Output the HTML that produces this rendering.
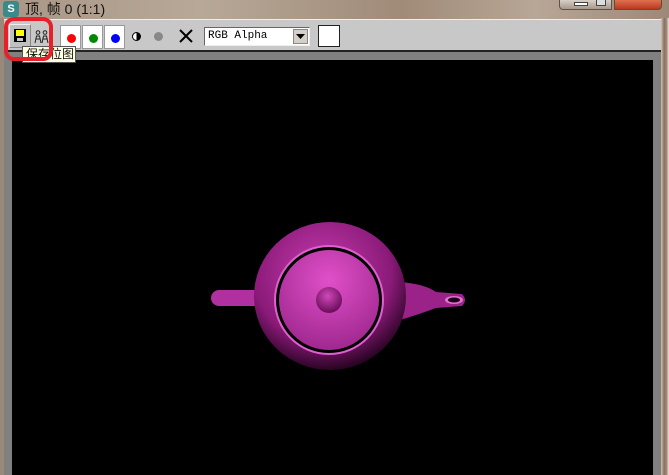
<!DOCTYPE html>
<html><head><meta charset="utf-8"><style>
*{margin:0;padding:0;box-sizing:border-box}
body{width:669px;height:475px;overflow:hidden;position:relative;background:#8a7a6c;font-family:"Liberation Sans","Noto Sans CJK SC",sans-serif}
.title{position:absolute;left:0;top:0;width:669px;height:20px;background:linear-gradient(90deg,#a89686,#b8a898 30%,#a08b78 60%,#b8a696 80%,#9e8878)}
.frameR{position:absolute;right:0;top:18px;width:8px;height:457px;background:linear-gradient(90deg,#cfc2b3,#8a7060 40%,#a08878 70%,#f0e8dc)}
.frameL{position:absolute;left:0;top:18px;width:4px;height:457px;background:#9a8878}
.tb{position:absolute;left:4px;top:19px;width:657px;height:33px;background:#c8c8c8;border-top:1px solid #eee;border-bottom:2px solid #222}
.gray{position:absolute;left:4px;top:52px;width:657px;height:423px;background:#808080}
.view{position:absolute;left:12px;top:60px;width:641px;height:415px;background:#000}
.cb{position:absolute;top:25px;width:21px;height:24px;background:#fff;border:1px solid #999}
.dot{position:absolute;left:6px;top:8px;width:9px;height:9px;border-radius:50%}
</style></head><body>
<div class="title"></div>
<div style="position:absolute;left:3px;top:1px;width:16px;height:16px;border-radius:3px;background:#3a8a8a;color:#fff;font-size:11px;text-align:center;line-height:16px;font-weight:bold">S</div>
<div style="position:absolute;left:25px;top:0;font-size:14px;color:#111;line-height:19px">顶, 帧 0 (1:1)</div>
<div style="position:absolute;left:559px;top:0;width:53px;height:10px;background:linear-gradient(#d8d0c8,#a89888);border:1px solid #555;border-top:none;border-radius:0 0 0 4px"></div>
<div style="position:absolute;left:574px;top:2px;width:14px;height:4px;background:#fff;border:1px solid #444"></div>
<div style="position:absolute;left:596px;top:0;width:10px;height:6px;border:1px solid #444;border-top:none;background:#ddd"></div>
<div style="position:absolute;left:614px;top:0;width:48px;height:10px;background:linear-gradient(#e07050,#b83820);border:1px solid #553;border-top:none;border-radius:0 0 4px 0"></div>
<div class="frameL"></div><div class="frameR"></div>
<div class="tb"></div>
<div class="gray"></div>
<div class="view"></div>
<div style="position:absolute;left:9px;top:24px;width:22px;height:24px;background:#c0c0c0;border:1px solid #888;border-top-color:#eee;border-left-color:#eee"></div>
<div style="position:absolute;left:14px;top:29px;width:12px;height:13px;background:#000"></div>
<div style="position:absolute;left:16px;top:30px;width:8px;height:6px;background:#ffff00"></div>
<div style="position:absolute;left:17px;top:38px;width:6px;height:3px;background:#c8c8c8"></div>
<svg style="position:absolute;left:34px;top:30px" width="16" height="14"><g fill="none" stroke="#222" stroke-width="1"><circle cx="4" cy="2.5" r="1.8"/><circle cx="11" cy="2.5" r="1.8"/><path d="M1 13L2.5 6H5.5L7 13M8 13L9.5 6H12.5L14 13M2 9H6M9 9H13"/></g></svg>
<div class="cb" style="left:60px"><div class="dot" style="background:#f00"></div></div>
<div class="cb" style="left:82px"><div class="dot" style="background:#080"></div></div>
<div class="cb" style="left:104px"><div class="dot" style="background:#00f"></div></div>
<div style="position:absolute;left:132px;top:32px;width:9px;height:9px;border-radius:50%;border:1px solid #000;background:linear-gradient(90deg,#fff 50%,#000 50%)"></div>
<div style="position:absolute;left:154px;top:32px;width:9px;height:9px;border-radius:50%;background:#888"></div>
<svg style="position:absolute;left:179px;top:29px" width="14" height="14"><path d="M1 1L13 13M13 1L1 13" stroke="#000" stroke-width="2"/></svg>
<div style="position:absolute;left:204px;top:27px;width:106px;height:19px;background:#fff;border:1px solid #666;border-right-color:#eee;border-bottom-color:#eee;font-family:'Liberation Mono',monospace;font-size:11px;line-height:17px;padding-left:3px">RGB Alpha</div>
<div style="position:absolute;left:293px;top:29px;width:15px;height:15px;background:#d4d0c8;border:1px solid #888"></div>
<svg style="position:absolute;left:296px;top:34px" width="9" height="5"><path d="M0 0H9L4.5 5Z" fill="#000"/></svg>
<div style="position:absolute;left:318px;top:25px;width:22px;height:22px;background:#fff;border:1px solid #222"></div>
<div style="position:absolute;left:22px;top:46px;width:54px;height:17px;background:#ffffe1;border:1px solid #555;font-size:12px;line-height:15px;padding-left:3px;color:#111">保存位图</div>
<div style="position:absolute;left:4px;top:17px;width:49px;height:44px;border:4px solid #e8202a;border-radius:10px"></div>
<svg style="position:absolute;left:200px;top:210px" width="280" height="170">
<defs>
<radialGradient id="b" cx="0.45" cy="0.35" r="0.65"><stop offset="0" stop-color="#c83cb0"/><stop offset="0.7" stop-color="#8a1a78"/><stop offset="1" stop-color="#2a0424"/></radialGradient>
<radialGradient id="l" cx="0.5" cy="0.3" r="0.7"><stop offset="0" stop-color="#e050c8"/><stop offset="1" stop-color="#a02890"/></radialGradient>
<radialGradient id="k" cx="0.45" cy="0.35" r="0.6"><stop offset="0" stop-color="#d048b8"/><stop offset="1" stop-color="#701060"/></radialGradient>
</defs>
<rect x="11" y="80" width="60" height="16" rx="8" fill="#b030a0"/>
<path d="M200 72Q225 74 236 82L262 84Q268 90 262 96L236 98Q220 104 200 110Z" fill="#9a2288"/>
<ellipse cx="254" cy="90" rx="9" ry="4" fill="#e070d0"/><ellipse cx="254" cy="90" rx="6" ry="2.5" fill="#200018"/>
<ellipse cx="130" cy="86" rx="76" ry="74" fill="url(#b)"/>
<circle cx="129" cy="90" r="55" fill="#e060d0"/>
<circle cx="129" cy="90" r="53" fill="#000"/>
<circle cx="129" cy="90" r="50" fill="url(#l)"/>
<circle cx="129" cy="90" r="13" fill="url(#k)"/>
</svg>
</body></html>
